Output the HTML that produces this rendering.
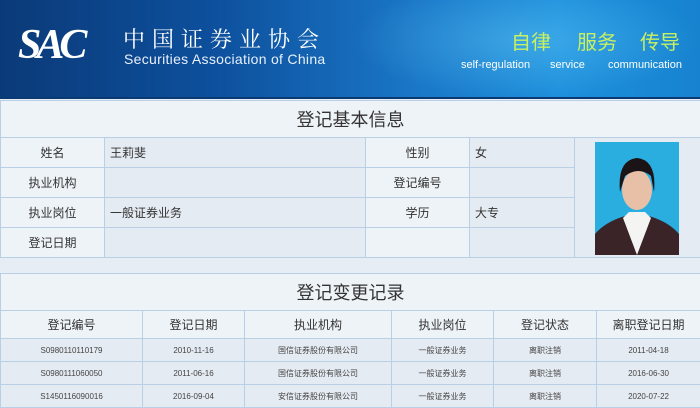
<!DOCTYPE html>
<html><head><meta charset="utf-8"><style>
*{margin:0;padding:0;box-sizing:border-box}
body{width:700px;height:408px;overflow:hidden;background:#e6edf5;font-family:"Liberation Sans","Noto Sans CJK SC",sans-serif;color:#333;position:relative}
.hdr{position:absolute;left:0;top:0;width:700px;height:99px;background:linear-gradient(90deg,#0b3a78 0%,#0d4f9c 30%,#1a78c8 60%,#1d8fdc 80%,#1783d0 100%);border-bottom:2px solid #0a3a74}
.hdr .glow{position:absolute;left:350px;top:0;width:350px;height:99px;background:radial-gradient(ellipse at 50% 40%,rgba(120,220,255,.35),rgba(0,0,0,0) 70%)}
.hdr div{line-height:1}
.sac{position:absolute;left:18px;top:24px;font-family:"Liberation Serif",serif;font-style:italic;font-weight:bold;font-size:42px;color:#fff;letter-spacing:-5px}
.cn{position:absolute;left:123px;top:29px;font-family:"Liberation Serif","Noto Serif CJK SC",serif;font-size:22px;color:#fff;letter-spacing:7px}
.en{position:absolute;left:124px;top:52px;font-size:14px;color:#e8f0fa;letter-spacing:.3px}
.tags{position:absolute;top:31px;font-family:"Noto Sans CJK SC",sans-serif;font-size:20px;color:#c8f060}
.sm{position:absolute;top:60px;font-size:11px;color:#fff}
table{position:absolute;left:0;border-collapse:collapse;width:700px;table-layout:fixed}
td{border:1px solid #b9cfe6;font-size:12px;text-align:center;background:#eef3f8}
.t1 td.v{background:#e5ebf2;text-align:left;padding-left:5px}
.title{font-size:18px;background:#eef3f8;height:37px}
.t2 td{font-size:8px;background:#e5ebf2;color:#444}
.t2 tr.h td{font-size:12px;background:#eef3f8;color:#333}
</style></head><body>
<div class="hdr"><div class="glow"></div>
<div class="sac">SAC</div>
<div class="cn">中国证券业协会</div>
<div class="en">Securities Association of China</div>
<div class="tags" style="left:511px">自律</div>
<div class="tags" style="left:577px">服务</div>
<div class="tags" style="left:640px">传导</div>
<div class="sm" style="left:461px">self-regulation</div>
<div class="sm" style="left:550px">service</div>
<div class="sm" style="left:608px">communication</div>
</div>
<table class="t1" style="top:100px">
<colgroup><col style="width:104px"><col style="width:261px"><col style="width:104px"><col style="width:105px"><col style="width:126px"></colgroup>
<tr><td colspan="5" class="title">登记基本信息</td></tr>
<tr style="height:30px"><td>姓名</td><td class="v">王莉斐</td><td>性别</td><td class="v">女</td>
<td rowspan="4" style="background:#e5ebf2;position:relative">
<svg width="84" height="113" style="position:absolute;left:20px;top:4px" viewBox="0 0 84 113">
<rect width="84" height="113" fill="#2aaee0"/>
<path d="M0 113 L0 92 Q10 80 30 74 L54 74 Q74 80 84 92 L84 113Z" fill="#3a2428"/>
<path d="M28 76 L42 113 L56 76 L50 70 L34 70Z" fill="#f4f4f2"/>
<ellipse cx="42" cy="48" rx="15" ry="20" fill="#e8c0a8"/>
<path d="M25 50 Q22 18 42 16 Q62 18 59 50 L56 34 Q44 24 30 34Z" fill="#1a1416"/>
</svg></td></tr>
<tr style="height:30px"><td>执业机构</td><td class="v"></td><td>登记编号</td><td class="v"></td></tr>
<tr style="height:30px"><td>执业岗位</td><td class="v">一般证券业务</td><td>学历</td><td class="v">大专</td></tr>
<tr style="height:30px"><td>登记日期</td><td class="v"></td><td></td><td class="v"></td></tr>
</table>
<table class="t2" style="top:273px">
<colgroup><col style="width:142px"><col style="width:102px"><col style="width:147px"><col style="width:102px"><col style="width:103px"><col style="width:104px"></colgroup>
<tr><td colspan="6" class="title" style="font-size:18px;background:#eef3f8;color:#333">登记变更记录</td></tr>
<tr class="h" style="height:28px"><td>登记编号</td><td>登记日期</td><td>执业机构</td><td>执业岗位</td><td>登记状态</td><td>离职登记日期</td></tr>
<tr style="height:23px"><td>S0980110110179</td><td>2010-11-16</td><td>国信证券股份有限公司</td><td>一般证券业务</td><td>离职注销</td><td>2011-04-18</td></tr>
<tr style="height:23px"><td>S0980111060050</td><td>2011-06-16</td><td>国信证券股份有限公司</td><td>一般证券业务</td><td>离职注销</td><td>2016-06-30</td></tr>
<tr style="height:23px"><td>S1450116090016</td><td>2016-09-04</td><td>安信证券股份有限公司</td><td>一般证券业务</td><td>离职注销</td><td>2020-07-22</td></tr>
</table>
</body></html>
